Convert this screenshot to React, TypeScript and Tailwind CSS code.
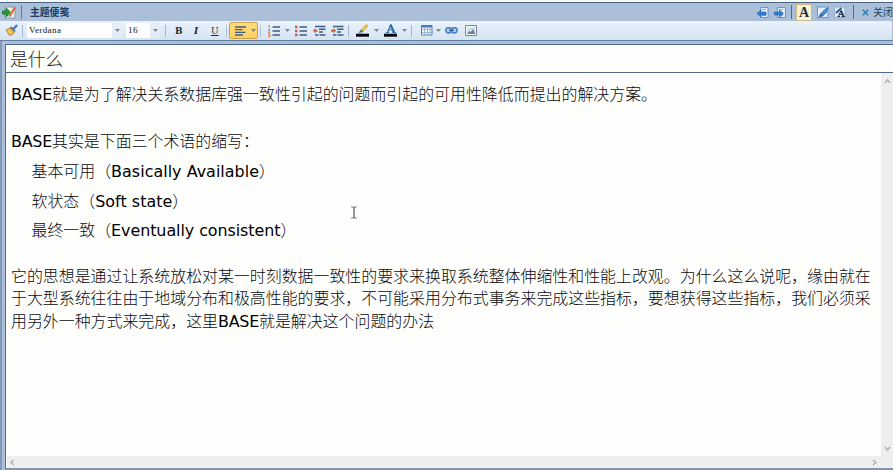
import type { ReactNode } from "react";

function Sep({ className = "" }: { className?: string }) {
  return <div className={`w-px shrink-0 ${className}`} />;
}

function Caret({ className = "" }: { className?: string }) {
  return (
    <svg width="5" height="3" viewBox="0 0 5 3" className={`shrink-0 ${className}`}>
      <path d="M0 0h5L2.5 3z" fill="#7d8894" />
    </svg>
  );
}

function Icon({ w = 13, h = 13, className = "", children }: { w?: number; h?: number; className?: string; children: ReactNode }) {
  return (
    <svg width={w} height={h} viewBox={`0 0 ${w} ${h}`} className={`shrink-0 ${className}`} fill="none">
      {children}
    </svg>
  );
}

function TitleBar() {
  return (
    <header className="flex h-[18px] shrink-0 items-center bg-[#abbfd9] pl-[2px]">
      <Icon w={14} h={13}>
        <rect x="3" y="1" width="10" height="11" fill="#eef0e8" stroke="#8b98a2" />
        <path d="M0 5h4V2l5 4.5L4 11V8H0z" fill="#249b35" stroke="#0c6a25" strokeWidth=".7" />
        <path d="M12.7 1.5 8 9.5" stroke="#df4a34" strokeWidth="2" />
        <path d="M11.5 2 7.5 9" stroke="#e9c650" strokeWidth=".8" />
        <path d="m7 11 .6-2 1.4.8z" fill="#333" />
      </Icon>
      <Sep className="ml-[5px] h-[14px] bg-[#5f7a9c]" />
      <span className="ml-[8px] text-[9.8px] leading-[14px] font-bold whitespace-nowrap text-[#1b3a63]">主题便笺</span>
      <div className="flex-1" />
      <Icon w={12}>
        <path d="M3.500 1.500h7.500v10h-7.500z" fill="#dfebf8" stroke="#6d94c2" />
        <path d="M5 3.500h4M5 9.500h4" stroke="#93b3d6" />
        <path d="M0 7.500 4 4v2h5v3H4v2z" fill="#327fce" stroke="#1f5da7" strokeWidth=".6" />
      </Icon>
      <Icon className="ml-[5px]">
        <path d="M3.500 1.500h8v10h-8z" fill="#dfebf8" stroke="#6d94c2" />
        <path d="M5 3.500h4M5 9.500h4" stroke="#93b3d6" />
        <path d="M9.500 7.500 5.500 4v2H.5v3h5v2z" fill="#327fce" stroke="#1f5da7" strokeWidth=".6" />
      </Icon>
      <Sep className="ml-[4px] h-[14px] bg-[#4d6888]" />
      <div className="ml-[4px] flex h-[17px] w-[16px] items-center justify-center border border-[#c9b98a] bg-[#fbf1d3] pt-px font-['Liberation_Serif',serif] text-[14px] leading-none font-bold text-[#222d3f]">A</div>
      <Icon w={12} className="ml-[5px]">
        <rect x=".5" y="1" width="10.500" height="10.500" fill="#e2eefb" stroke="#6c96c8" />
        <path d="M11.500 1 8 3 3 8 1.500 11.200l4-.8L10 6z" fill="#2869ad" />
        <path d="M9.500 3.500 5 8.500" stroke="#5fa3e6" strokeWidth="1.200" />
      </Icon>
      <Icon w={12} className="ml-[5px]">
        <rect x=".5" y="1" width="10.500" height="10.500" fill="#dce8f5" stroke="#9aafc9" />
        <path d="M7.500 2 2 7" stroke="#285d96" strokeWidth="2" />
        <path d="M4.500 10.500 7 4.500M5 8.500h4M3.500 10.500h2.500M7.500 10.500H11" stroke="#27364c" />
        <path d="M7 4.500 9.500 10.500" stroke="#27364c" strokeWidth="1.800" />
      </Icon>
      <Sep className="ml-[7px] h-[14px] bg-[#4d6888]" />
      <Icon w={7} h={7} className="ml-[8px]">
        <path d="m.8.8 5.400 5.400M6.200.8.8 6.200" stroke="#347db3" strokeWidth="1.600" />
      </Icon>
      <span className="ml-[4px] w-[20px] text-[10px] leading-[14px] whitespace-nowrap text-[#263f5e]">关闭</span>
    </header>
  );
}

function Field({ text, className }: { text: string; className: string }) {
  return (
    <div className={`flex h-[15px] shrink-0 items-center bg-white pl-[2px] font-['Liberation_Serif',serif] text-[9px] text-[#111] ${className}`}>
      <span className="flex-1 pb-px leading-none tracking-[0.4px]">{text}</span>
      <span className="flex h-full w-[10px] items-center justify-center bg-[#e3edf7]">
        <Caret />
      </span>
    </div>
  );
}

const lines = "#405e80";

function Toolbar() {
  return (
    <div className="flex h-[19px] w-[892px] shrink-0 items-center rounded-r-[2px] bg-linear-to-b from-[#eaf3fc] to-[#d5e3f2] pl-[5px]">
      <Icon w={13}>
        <path d="M8 4 11.500.8l1 1L9.500 5z" fill="#608cc2" stroke="#355e95" strokeWidth=".8" />
        <path d="M5.500 3 10 7.500" stroke="#477eba" strokeWidth="2.200" />
        <path d="M5 4 1 6l3.500 5.500L8 10l1.500-2z" fill="#eeb842" stroke="#a77b2c" strokeWidth=".8" />
        <path d="m3 6 3.500 4" stroke="#fbe28c" />
      </Icon>
      <Sep className="ml-[4px] h-[12px] bg-[#a4b5ca]" />
      <Field text="Verdana" className="ml-[4px] w-[95px]" />
      <Field text="16" className="ml-[4px] w-[34px]" />
      <Sep className="ml-[5px] h-[12px] bg-[#a4b5ca]" />
      <div className="ml-[6px] flex w-[54px] shrink-0 font-['DejaVu_Serif',serif] text-[9px] leading-[12px] text-[#242932]">
        <span className="w-[18px] pl-[3px] font-bold">B</span>
        <span className="w-[18px] pl-[4px] font-bold italic">I</span>
        <span className="w-[18px] pl-[3px] underline underline-offset-1">U</span>
      </div>
      <Sep className="h-[12px] bg-[#b3c2d4]" />
      <div className="ml-[2px] flex h-[17px] w-[29px] shrink-0 items-center rounded-[2px] border border-[#c9a04d] bg-linear-to-b from-[#ffdc7d] to-[#ffd163] pl-[5px]">
        <Icon w={11} h={10}>
          <path d="M0 1h11M0 3.700h7.500M0 6.400h10.500M0 9h8" stroke={lines} strokeWidth="1.300" />
        </Icon>
        <Caret className="ml-[5px]" />
      </div>
      <Sep className="ml-[2px] h-[12px] bg-[#b3c2d4]" />
      <Icon w={12} h={12} className="ml-[7px]">
        <path d="M1 0v3M0 4.500h2L.5 7.500H2M0 9h2v2.500H0" stroke="#cc7552" />
        <path d="M4.500 2H12M4.500 6H12M4.500 10H12" stroke={lines} strokeWidth="1.300" />
      </Icon>
      <Caret className="ml-[5px]" />
      <Icon w={12} h={12} className="ml-[5px]">
        <path d="M0 .8h2.500v2.500H0zM0 4.800h2.500v2.500H0zM0 8.800h2.500v2.500H0z" fill="#c95f38" />
        <path d="M4.500 2H12M4.500 6H12M4.500 10H12" stroke={lines} strokeWidth="1.300" />
      </Icon>
      <Icon w={13} h={12} className="ml-[6px]">
        <path d="M2 1.500h10.500M6 4.200h6.500M6 7h4M2 10h3.500M6.500 10h6" stroke={lines} strokeWidth="1.400" />
        <path d="M0 5.700 2.500 3v1.700h2v2h-2v1.700z" fill="#c95f38" />
      </Icon>
      <Icon w={13} h={12} className="ml-[5px]">
        <path d="M2 1.500h10.500M6 4.200h6.500M6 7h4M2 10h3.500M6.500 10h6" stroke={lines} strokeWidth="1.400" />
        <path d="M5 5.700 2.500 3v1.700H0v2h2.500v1.700z" fill="#c95f38" />
      </Icon>
      <Sep className="ml-[4px] h-[12px] bg-[#a4b5ca]" />
      <Icon w={14} className="ml-[7px]">
        <path d="M5 6 10 .5 12 2 7 7.500z" fill="#f2bf48" stroke="#c3952f" strokeWidth=".6" />
        <path d="M4.800 5.500 7.300 7.800 5.500 8.500 2.500 9z" fill="#446fa6" />
        <path d="M0 9.700h13v3H0z" fill="#080808" />
      </Icon>
      <Caret className="ml-[4px]" />
      <Icon w={14} className="ml-[5px]">
        <path d="M3.500 8.500 6.500 1M4.500 6h4.500M2 8.500h3M8.500 8.500H12" stroke="#2769ad" strokeWidth="1.200" />
        <path d="M6.500.5 10 8.500" stroke="#2769ad" strokeWidth="2.200" />
        <path d="M0 9.700h13v3H0z" fill="#080808" />
      </Icon>
      <Caret className="ml-[4px]" />
      <Sep className="ml-[4px] h-[12px] bg-[#a4b5ca]" />
      <Icon w={12} h={11} className="ml-[9px]">
        <path d="M.5.5h10.500v9.500H.5z" fill="#f1f7fd" stroke="#5b82ad" />
        <path d="M0 1.500h11" stroke="#4779b3" strokeWidth="2" />
        <path d="M3.500 2v8M6.500 2v8M9 2v8M1 4.500h10M1 7.500h10" stroke="#8ba9cb" strokeWidth=".8" />
      </Icon>
      <Caret className="ml-[3px]" />
      <Icon w={13} h={9} className="ml-[4px]">
        <rect x="1" y="1.800" width="5.500" height="5" rx="2" fill="#bcd8f4" stroke="#4a84cb" strokeWidth="1.800" />
        <rect x="6.500" y="1.800" width="5.500" height="5" rx="2" fill="#bcd8f4" stroke="#4a84cb" strokeWidth="1.800" />
        <path d="M4 4.300h5" stroke="#2c5f9f" strokeWidth="1.300" />
      </Icon>
      <Icon w={12} h={11} className="ml-[7px]">
        <path d="M.5.5h11v10H.5z" fill="#fafcfe" stroke="#77838f" />
        <path d="M2 2h8v7H2z" fill="#cbdff2" />
        <path d="m2 9 2.500-3L6 7l2-3 2.500 5z" fill="#68829b" />
        <circle cx="4" cy="3.500" r="1" fill="#f2f5f6" />
      </Icon>
    </div>
  );
}

function Latin({ children, className = "" }: { children: ReactNode; className?: string }) {
  return <span className={`font-['DejaVu_Sans',sans-serif] font-normal text-black ${className}`}>{children}</span>;
}

function Note() {
  return (
    <article className="relative min-w-0 flex-1 bg-[#fefefd] pt-[9px] pl-[5px] text-[15.93px] leading-[24px] font-light whitespace-nowrap text-[#08090c]">
      <p className="h-[47px]"><Latin className="tracking-[-0.25px]">BASE</Latin>就是为了解决关系数据库强一致性引起的问题而引起的可用性降低而提出的解决方案。</p>
      <p className="h-[30px]"><Latin className="tracking-[-0.25px]">BASE</Latin>其实是下面三个术语的缩写：</p>
      <ul className="pl-[20.5px]">
        <li className="h-[30px]">基本可用（<Latin className="tracking-[0.03px]">Basically Available</Latin>）</li>
        <li className="h-[29px]">软状态（<Latin className="tracking-[0.03px]">Soft state</Latin>）</li>
        <li className="h-[46px]">最终一致（<Latin className="tracking-[-0.07px]">Eventually consistent</Latin>）</li>
      </ul>
      <p className="h-[22px]">它的思想是通过让系统放松对某一时刻数据一致性的要求来换取系统整体伸缩性和性能上改观。为什么这么说呢，缘由就在</p>
      <p className="h-[23px]">于大型系统往往由于地域分布和极高性能的要求，不可能采用分布式事务来完成这些指标，要想获得这些指标，我们必须采</p>
      <p>用另外一种方式来完成，这里<Latin className="tracking-[-0.25px]">BASE</Latin>就是解决这个问题的办法</p>
      <svg width="6" height="13" viewBox="0 0 6 13" className="absolute top-[133px] left-[345px]" fill="none">
        <path d="M0 1h6M0 12h6" stroke="#888" />
        <path d="M3 1v11" stroke="#333" />
      </svg>
    </article>
  );
}

function Chevron({ d, className = "" }: { d: string; className?: string }) {
  return (
    <svg width="7" height="7" viewBox="0 0 7 7" className={className} fill="none">
      <path d={d} stroke="#b2b2b2" strokeWidth="1.500" />
    </svg>
  );
}

export default function App() {
  return (
    <div className="flex h-[470px] w-[893px] flex-col overflow-hidden bg-[#abbfd9] font-['Noto_Sans_CJK_SC',sans-serif]">
      <div className="h-[3px] shrink-0 border-b border-[#4b6685] bg-[#f8fafb]" />
      <TitleBar />
      <Toolbar />
      <div className="h-px shrink-0 bg-[#637e9f]" />
      <div className="flex min-h-0 flex-1 border-l-2 border-[#8299b8] pt-[3px] pl-[3px]">
        <main className="flex min-w-0 flex-1 flex-col border-t border-b-2 border-l border-t-[#4f6d90] border-b-[#8494a9] border-l-[#536d8c] bg-[#fefefd]">
          <h1 className="h-[28px] shrink-0 border-b border-[#526b89] pl-[4px] text-[17.8px] leading-[27px] font-light text-[#1c1c1c]">是什么</h1>
          <div className="flex min-h-0 flex-1">
            <Note />
            <div className="flex w-[12px] flex-col items-center justify-between bg-[#eee] pt-[5px] pb-[4px]">
              <Chevron d="m1 5 2.500-3L6 5" />
              <Chevron d="m1 2 2.500 3L6 2" />
            </div>
          </div>
          <div className="ml-px flex h-[12px] shrink-0 items-center justify-between bg-[#eee] pr-[15px] pl-[2px]">
            <Chevron d="M5 1 2 3.500 5 6" />
            <Chevron d="m2 1 3 2.500L2 6" />
          </div>
        </main>
      </div>
    </div>
  );
}
